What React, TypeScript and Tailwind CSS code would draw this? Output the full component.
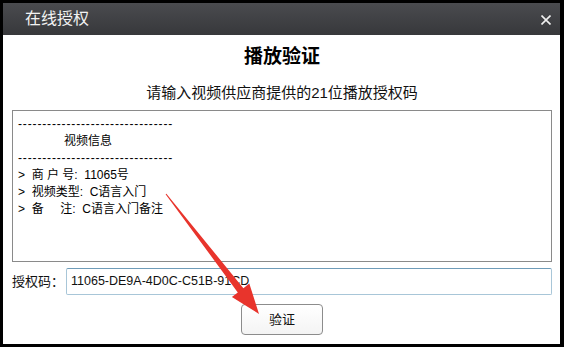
const font = { fontFamily: '"Liberation Sans", "Noto Sans CJK SC", sans-serif' };

const dashes = "--------------------------------";

export default function App() {
  return (
    <div
      className="relative w-[564px] h-[347px] bg-black pt-[3px] pl-[3px] pr-[4px] pb-[3px] flex flex-col"
      style={font}
    >
      {/* Title bar */}
      <div className="h-[32px] shrink-0 bg-gradient-to-b from-[#4a4b4f] to-[#37383b] flex items-center justify-between pl-[22px] pr-[9px]">
        <span className="text-[16px] leading-none text-[#f2f2f2]">在线授权</span>
        <svg width="10" height="10" viewBox="0 0 10 10" className="mt-[2px]">
          <path d="M0.5 0.5L9.5 9.5M9.5 0.5L0.5 9.5" stroke="#f0f0f0" strokeWidth="1.6" />
        </svg>
      </div>

      {/* Body */}
      <div className="flex-1 bg-white flex flex-col pl-[9px] pr-[8px]">
        <h1 className="mt-[10px] text-center text-[19px] leading-[24px] font-bold text-black">
          播放验证
        </h1>
        <p className="mt-[14px] text-center text-[15px] leading-[20px] text-[#111]">
          请输入视频供应商提供的21位播放授权码
        </p>

        {/* Info box */}
        <div className="mt-[7px] h-[152px] border border-[#8a8a8a] pt-[5px] pl-[5px] text-[12px] leading-[17px] text-black whitespace-pre">
          <div className="tracking-[0.85px]">{dashes}</div>
          <div className="pl-[46px]">视频信息</div>
          <div className="tracking-[0.85px]">{dashes}</div>
          <div>{">  商 户 号:  11065号"}</div>
          <div>{">  视频类型:  C语言入门"}</div>
          <div>{">  备     注:  C语言入门备注"}</div>
        </div>

        {/* Code input */}
        <div className="mt-[6px] flex items-center">
          <label className="w-[54px] text-[13px] text-[#111]">授权码：</label>
          <div className="flex-1 h-[27px] flex items-center border border-[#a8c6d8] border-t-[#6f9cb9] rounded-[2px] pl-[4px] text-[12.5px] text-[#111]">
            11065-DE9A-4D0C-C51B-91CD
          </div>
        </div>

        {/* Button */}
        <div className="mt-[9px] flex justify-center">
          <button className="w-[82px] h-[31px] rounded-[4px] border border-[#8c8c8c] bg-gradient-to-b from-white to-[#f4f4f4] text-[13px] text-[#111]">
            验证
          </button>
        </div>
      </div>

      {/* Red annotation arrow */}
      <svg className="absolute inset-0 pointer-events-none" width="564" height="347" viewBox="0 0 564 347">
        <polygon
          points="166.4,193.7 243.4,288.2 249.3,283.6 259,314 231.9,297 237.8,292.4 165.6,194.3"
          fill="#e8342c"
        />
      </svg>
    </div>
  );
}
